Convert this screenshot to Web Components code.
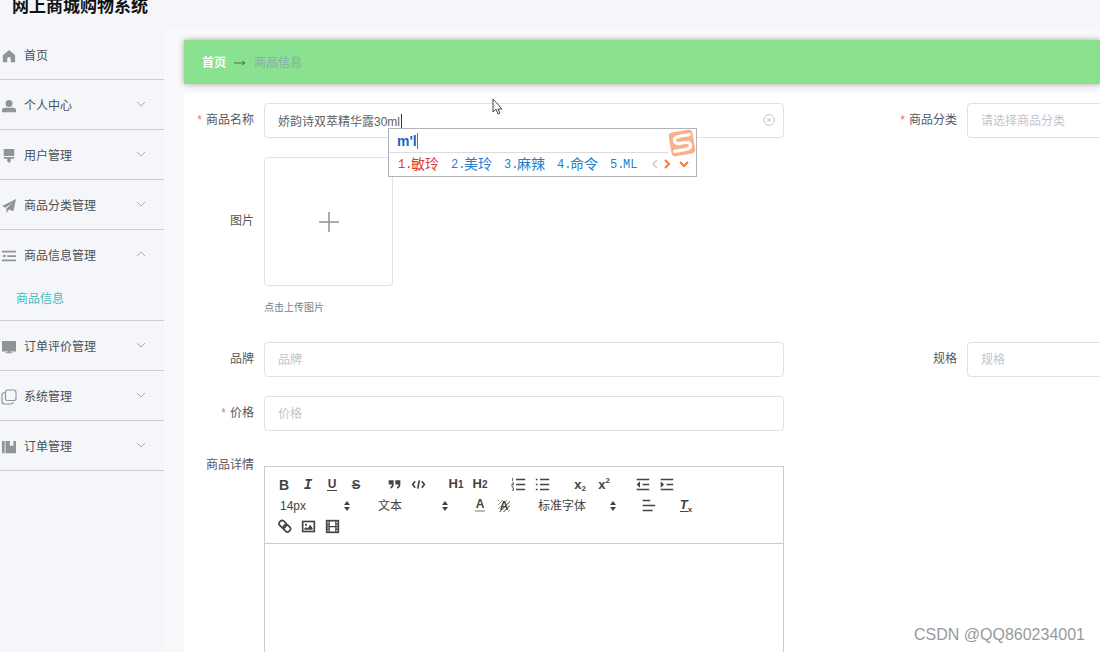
<!DOCTYPE html>
<html lang="zh-CN">
<head>
<meta charset="utf-8">
<title>网上商城购物系统</title>
<style>
html, body { margin: 0; height: 100%; }
body { overflow: hidden; font: 12px/20px "Liberation Sans", "Noto Sans CJK SC", sans-serif; color: #606266; background: #f5f7fa; }
</style>
</head>
<body>
<mall-app>
  <side-nav slot="nav">
    <nav-item icon="home" label="首页" leaf></nav-item>
    <nav-item icon="user" label="个人中心"></nav-item>
    <nav-item icon="brush" label="用户管理"></nav-item>
    <nav-item icon="plane" label="商品分类管理"></nav-item>
    <nav-item icon="fold" label="商品信息管理" open><a href="#goods" slot="sub">商品信息</a></nav-item>
    <nav-item icon="screen" label="订单评价管理"></nav-item>
    <nav-item icon="copy" label="系统管理"></nav-item>
    <nav-item icon="book" label="订单管理"></nav-item>
  </side-nav>
  <crumb-bar></crumb-bar>
  <goods-form>
    <text-field label="商品名称" value="娇韵诗双萃精华露30ml" required clearable></text-field>
    <select-field label="商品分类" placeholder="请选择商品分类" required></select-field>
    <upload-field class="wide" label="图片" hint="点击上传图片"></upload-field>
    <text-field label="品牌" placeholder="品牌"></text-field>
    <text-field label="规格" placeholder="规格"></text-field>
    <text-field class="wide" label="价格" placeholder="价格" required></text-field>
    <editor-field class="wide" label="商品详情"></editor-field>
  </goods-form>
  <ime-popup slot="overlay"></ime-popup>
  <mouse-pointer slot="overlay"></mouse-pointer>
  <water-mark slot="overlay">CSDN @QQ860234001</water-mark>
</mall-app>

<script>
const define = (name, css, html, Base = HTMLElement) =>
  customElements.define(name, class extends Base {
    connectedCallback() {
      if (this.shadowRoot) return;
      const t = document.createElement('template');
      t.innerHTML = `<style>:host,*{box-sizing:border-box}svg{display:block}${css}</style>${typeof html === 'function' ? html(this) : html}`;
      this.attachShadow({ mode: 'open' }).append(t.content.cloneNode(true));
    }
  });

const navIcons = {
  home: '<path d="M8 1 1 7v8h5v-4a2 2 0 0 1 4 0v4h5V7z"/>',
  user: '<circle cx="8" cy="5" r="4"/><path d="M0 15v-2q0-3 3-3h10q3 0 3 3v2z"/>',
  brush: '<path d="M2 0h12v8H2zM2 9h12v2H10v3l-2 2-2-2v-3H2z"/>',
  plane: '<path d="M16 0 0 8l4 2 8-6-7 7v5l3-4 5 2z"/>',
  fold: '<path d="M0 2h16v2H0zM6 7h10v2H6zM0 12h16v2H0zM0 8l4-2v4z"/>',
  screen: '<path d="M0 1h16v12H0zM7 12h2v2h3v1H4v-1h3z"/>',
  copy: '<path d="M6 0h7q3 0 3 3v7q0 2-3 2H6q-2 0-2-2V3q0-3 2-3zM3 3Q0 3 0 6v7q0 3 3 3h7q2 0 3-2" fill="none" stroke="#909399" stroke-width="1.3"/>',
  book: '<path d="M0 1h3v14H0zM4 1h5v6l2-1 2 1V1h3v14H4z"/>'
};

define('mall-app', `
  :host{display:flex;flex-direction:column;height:100vh;overflow:hidden}
  header{height:30px;flex:none;padding-left:12px;background:#f5f6fa}
  h1{margin:0;height:14px;line-height:14px;font-size:17px;color:#111}
  .body{display:flex;flex:1;min-height:0}
  main{flex:1;min-width:0;padding:10px 0 0 20px;background:#f7f9fb}
`, `<header><h1>网上商城购物系统</h1></header>
  <div class="body"><slot name="nav"></slot><main><slot></slot></main></div>
  <slot name="overlay"></slot>`);

define('side-nav', `
  :host{display:block;width:164px;flex:none;background:#f4f6fa}
`, '<nav><slot></slot></nav>');

define('nav-item', `
  :host{display:block;border-bottom:1px solid #cbcdd2}
  button{display:flex;align-items:center;gap:8px;width:100%;height:49px;padding:2px 18px 0 2px;border:0;background:none;font:inherit;color:#4c4f55;text-align:left}
  .icon{width:14px;height:14px;fill:#909399;overflow:visible}
  span{flex:1}
  .chev{width:10px;height:10px;fill:none;stroke:#a8abb2;margin-bottom:4px}
  ::slotted(a){display:block;box-sizing:border-box;height:41px;padding:10px 16px 0;line-height:20px;color:#44bcbc;text-decoration:none}
`, el => `<button type="button"><svg class="icon" viewBox="0 0 16 16">${navIcons[el.getAttribute('icon')]}</svg>
  <span>${el.getAttribute('label')}</span>
  ${el.hasAttribute('leaf') ? '' : `<svg class="chev" viewBox="0 0 10 10"><path d="${el.hasAttribute('open') ? 'M1 7l4-4 4 4' : 'M1 3l4 4 4-4'}"/></svg>`}
  </button><slot name="sub"></slot>`);

define('crumb-bar', `
  :host{display:block;background:#8ae18f;box-shadow:0 0 6px rgba(0,0,0,.35);margin-bottom:9px}
  nav{display:flex;align-items:center;gap:8px;height:44px;padding:2px 0 0 18px}
  a{color:#fff;font-weight:700;text-decoration:none}
  svg{width:12px;height:10px;stroke:#4e6b55;fill:none}
  span{color:#86acac}
`, `<nav aria-label="breadcrumb"><a href="#home">首页</a>
  <svg viewBox="0 0 12 10"><path d="M0 5h11M8 3l3 2-3 2"/></svg><span>商品信息</span></nav>`);

define('goods-form', `
  :host{display:block;background:#fff;padding-top:10px}
  form{display:grid;grid-template-columns:33fr 10fr;row-gap:19px}
  ::slotted(.wide){grid-column:1/-1}
`, '<form><slot></slot></form>');

const fieldCss = `
  :host{display:flex;align-items:flex-start;min-width:0}
  .label{flex:none;width:80px;padding-right:10px;line-height:35px;text-align:right;white-space:nowrap;color:#55585e}
  .req::before{content:"*";color:#f56c6c;margin-right:4px}
  .box{position:relative;flex:1;min-width:240px;max-width:520px}
  input.text,select.text{display:block;width:100%;height:35px;padding:0 13px;border:1px solid #dfe1e8;border-radius:4px;background:#fff;font:inherit;color:#606266;outline:0;appearance:none}
  input::placeholder{color:#c0c4cc;opacity:1}
  select.text{color:#c0c4cc}
`;
const label = el => `<label class="label${el.hasAttribute('required') ? ' req' : ''}" for="c" id="l">${el.getAttribute('label')}</label>`;

define('text-field', `${fieldCss}
  .clear{position:absolute;right:9px;top:11px;width:12px;height:12px;padding:0;border:0;background:none}
  .clear svg{width:12px;height:12px;fill:none;stroke:#c0c4cc}
  .caret{position:absolute;left:137px;top:11px;width:1px;height:14px;background:#333}
`, el => `${label(el)}<div class="box"><input class="text" id="c" type="text" value="${el.getAttribute('value') || ''}" placeholder="${el.getAttribute('placeholder') || ''}">
  ${el.hasAttribute('clearable') ? `<i class="caret"></i><button class="clear" type="button" aria-label="清空"><svg viewBox="0 0 12 12"><circle cx="6" cy="6" r="5.3"/><path d="M4 4l4 4M8 4l-4 4"/></svg></button>` : ''}</div>`);

define('select-field', fieldCss, el => `${label(el)}<div class="box"><select class="text" id="c"><option>${el.getAttribute('placeholder')}</option></select></div>`);

define('upload-field', `${fieldCss}
  .label{line-height:129px}
  .drop{display:grid;place-items:center;width:129px;height:129px;border:1px solid #dfe1e8;border-radius:4px}
  .drop svg{width:20px;height:20px;stroke:#8c939d;stroke-width:1.5}
  input{position:absolute;width:1px;height:1px;opacity:0}
  p{margin:0;padding-top:7px;line-height:30px;font-size:10px;color:#7b8087}
`, el => `${label(el)}<div class="box"><input id="c" type="file" accept="image/*">
  <label class="drop" for="c"><svg viewBox="0 0 20 20"><path d="M10 0v20M0 10h20"/></svg></label>
  <p>${el.getAttribute('hint')}</p></div>`);

const svg = inner => `<svg viewBox="0 0 18 18">${inner}</svg>`;
const btn = (name, inner) => `<button type="button" title="${name}">${inner}</button>`;
const group = (...items) => `<div class="group">${items.join('')}</div>`;
const picker = (name, text, cls = '') => `<div class="picker ${cls}"><select aria-label="${name}"><option>${text}</option></select><svg viewBox="0 0 8 10"><path d="M4 0l3 4H1zM4 10l3-4H1z"/></svg></div>`;
const lines = 'M6 3h11M6 9h11M6 15h11';

define('editor-field', `${fieldCss}
  .label{line-height:30px}
  .box{margin-top:16px;border:1px solid #ccc}
  .toolbar{display:flex;flex-wrap:wrap;column-gap:14px;padding:7px 16px 6px 7px;border-bottom:1px solid #ccc}
  .group{display:flex}
  button{display:flex;align-items:center;justify-content:center;width:24px;height:21px;padding:0;border:0;background:none;font:700 12px/16px "Liberation Sans",sans-serif;color:#444}
  button svg{width:15px;height:15px;fill:none;stroke:#444;stroke-width:2}
  button .fill{fill:#444;stroke:none}
  .b{font-size:14px}
  .i{font:italic 700 14px/16px "Liberation Mono",monospace}
  .u{font-size:12px;line-height:11px;border-bottom:1px solid #444;padding:0 1px}
  .s{font-size:13px;text-decoration:line-through 1px}
  .x{font-size:13px}
  small{font-size:8px;line-height:8px}
  .lo{align-self:flex-end;margin-bottom:2px}
  .hi{align-self:flex-start;margin-top:3px}
  .h{font-size:13px}
  .h small{font-size:10px;line-height:16px}
  .color{line-height:11px;border-bottom:2px solid #bbb;padding:0 1px}
  .bg{line-height:12px;padding:0 2px;background:repeating-linear-gradient(135deg,#999 0 1px,#fff 1px 3px)}
  .t{font-style:italic;font-size:13px;line-height:12px;border-bottom:1px solid #444}
  .picker{display:grid;width:84px;height:21px;align-items:center}
  .picker.font{width:92px}
  .picker>*{grid-area:1/1}
  .picker svg{justify-self:end;width:8px;height:10px;margin-right:5px;fill:#444;pointer-events:none}
  select{appearance:none;width:100%;height:21px;padding:0 8px;border:0;background:none;font:inherit;color:#444;outline:0}
  .page{height:220px;outline:0}
`, el => `<span class="label" id="l">${el.getAttribute('label')}</span>
  <div class="box"><div class="toolbar" role="toolbar">
  ${group(btn('加粗', '<span class="b">B</span>'), btn('斜体', '<span class="i">I</span>'), btn('下划线', '<span class="u">U</span>'), btn('删除线', '<span class="s">S</span>'))}
  ${group(btn('引用', svg('<path class="fill" d="M2 4h6v5q0 4-4 5v-2q2-1 2-3H2zM10 4h6v5q0 4-4 5v-2q2-1 2-3h-4z"/>')), btn('代码', svg('<path d="M5 5 2 9l3 4M13 5l3 4-3 4M10 4 8 14"/>')))}
  ${group(btn('标题一', '<span class="h">H<small>1</small></span>'), btn('标题二', '<span class="h">H<small>2</small></span>'))}
  ${group(btn('有序列表', svg(`<path d="${lines}"/><path d="M2 1v4M1 7h2v2H1v2h2M1 13h2v3H1" stroke-width="1"/>`)), btn('无序列表', svg(`<path d="${lines}M1 3h2M1 9h2M1 15h2"/>`)))}
  ${group(btn('下标', '<span class="x">x</span><small class="lo">2</small>'), btn('上标', '<span class="x">x</span><small class="hi">2</small>'))}
  ${group(btn('减少缩进', svg('<path d="M2 3h15M9 9h8M2 15h15"/><path class="fill" d="M6 5v8L2 9z"/>')), btn('增加缩进', svg('<path d="M2 3h15M9 9h8M2 15h15"/><path class="fill" d="M2 5v8l4-4z"/>')))}
  ${group(picker('字号', '14px'))}
  ${group(picker('标题', '文本'))}
  ${group(btn('文字颜色', '<span class="color">A</span>'), btn('背景颜色', '<span class="bg">A</span>'))}
  ${group(picker('字体', '标准字体', 'font'))}
  ${group(btn('对齐', svg('<path d="M2 3h9M2 9h15M2 15h12"/>')))}
  ${group(btn('清除格式', '<span class="t">T</span><small class="lo">x</small>'))}
  ${group(btn('链接', svg('<g transform="rotate(45 9 9)"><rect x="1" y="5" width="9" height="7" rx="3"/><rect x="8" y="5" width="9" height="7" rx="3"/></g>')),
    btn('图片', svg('<rect x="2" y="3" width="14" height="12"/><circle class="fill" cx="6" cy="7" r="1.300"/><path class="fill" d="M4 13v-2l2-1 2 1 3-4 3 4v2z"/>')),
    btn('视频', svg('<rect x="2" y="2" width="14" height="14"/><path d="M5 2v14M13 2v14M5 9h8M2 6h3M2 9h3M2 12h3M13 6h3M13 9h3M13 12h3" stroke-width="1.500"/>')))}
  </div><div class="page" contenteditable="true" role="textbox" aria-labelledby="l"></div></div>`);

define('ime-popup', `
  :host{position:absolute;left:388px;top:128px;display:block;width:309px;height:49px;border:1px solid #b0b3ba;background:#fff}
  .typed{width:281px;height:24px;padding-left:8px;border-bottom:1px solid #dcdcdc;font-weight:700;font-size:14px;line-height:24px;color:#1464c8}
  .typed span{border-right:1px solid #e8402c}
  ol{display:grid;grid-template-columns:repeat(5,53px);margin:0;padding:0 0 0 9px;list-style:none;line-height:24px;font-size:14px;font-family:"Liberation Mono","Noto Sans CJK SC",monospace;color:#2080d0}
  li{display:flex;white-space:nowrap}
  b{width:13px;font-weight:400;font-size:12px}
  li:first-child{color:#dc3c2c}
  .ml{font-size:12px}
  .logo{position:absolute;right:0;top:0;width:28px;height:28px;background:#fff}
  .nav{position:absolute;right:7px;bottom:7px;width:38px;height:10px;fill:none;stroke-width:2}
`, `<div class="typed"><span>m'l</span></div>
  <ol><li><b>1.</b>敏玲</li><li><b>2.</b>美玲</li><li><b>3.</b>麻辣</li><li><b>4.</b>命令</li><li class="ml"><b>5.</b>ML</li></ol>
  <svg class="logo" viewBox="0 0 28 28"><g transform="rotate(-10 14 14)"><rect x="2" y="2" width="24" height="24" rx="4" fill="#fbb08a"/><path d="M24 7H12Q7 7 7 10.500T12 14h5q5 0 5 3.500T17 21H4" fill="none" stroke="#fff" stroke-width="3.200"/></g></svg>
  <svg class="nav" viewBox="0 0 38 10"><path d="M6 1 2 5l4 4" stroke="#ccc" stroke-width="1.500"/><path d="M14 1l4 4-4 4M29 3l4 4 4-4" stroke="#f47a35"/></svg>`);

define('mouse-pointer', `
  :host{position:absolute;left:492px;top:98px;width:12px;height:18px}
`, `<svg width="12" height="18" viewBox="0 0 12 18"><path d="M1 1v13l3-3 2 5 2-1-2-4h4z" fill="#fff" stroke="#444"/></svg>`);

define('water-mark', `
  :host{position:absolute;right:15px;bottom:7px;font-size:16px;line-height:20px;color:#999}
`, '<slot></slot>');
</script>
</body>
</html>
